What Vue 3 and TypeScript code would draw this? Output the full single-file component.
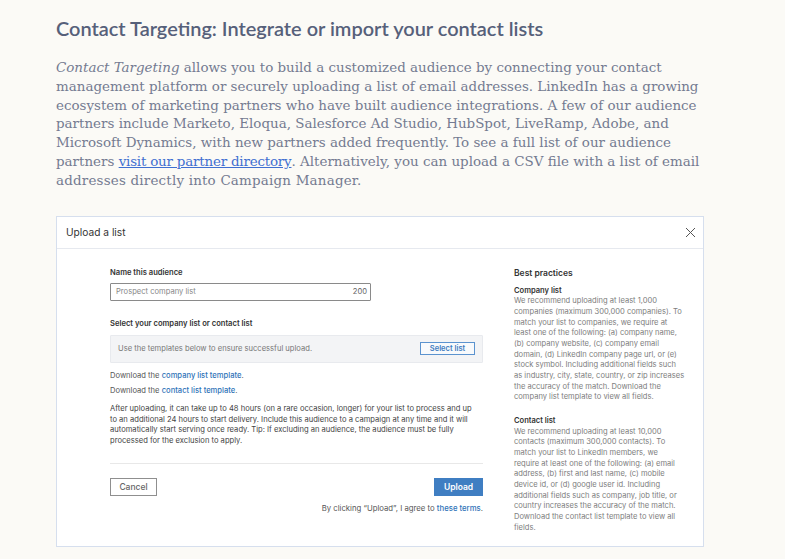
<script setup lang="ts">
const introLines: string[] = [
  'management platform or securely uploading a list of email addresses. LinkedIn has a growing',
  'ecosystem of marketing partners who have built audience integrations. A few of our audience',
  'partners include Marketo, Eloqua, Salesforce Ad Studio, HubSpot, LiveRamp, Adobe, and',
  'Microsoft Dynamics, with new partners added frequently. To see a full list of our audience',
]
const companyLines: string[] = [
  'We recommend uploading at least 1,000',
  'companies (maximum 300,000 companies). To',
  'match your list to companies, we require at',
  'least one of the following: (a) company name,',
  '(b) company website, (c) company email',
  'domain, (d) LinkedIn company page url, or (e)',
  'stock symbol. Including additional fields such',
  'as industry, city, state, country, or zip increases',
  'the accuracy of the match. Download the',
  'company list template to view all fields.',
]
const contactLines: string[] = [
  'We recommend uploading at least 10,000',
  'contacts (maximum 300,000 contacts). To',
  'match your list to LinkedIn members, we',
  'require at least one of the following: (a) email',
  'address, (b) first and last name, (c) mobile',
  'device id, or (d) google user id. Including',
  'additional fields such as company, job title, or',
  'country increases the accuracy of the match.',
  'Download the contact list template to view all',
  'fields.',
]
const noteLines: string[] = [
  'After uploading, it can take up to 48 hours (on a rare occasion, longer) for your list to process and up',
  'to an additional 24 hours to start delivery. Include this audience to a campaign at any time and it will',
  'automatically start serving once ready. Tip: If excluding an audience, the audience must be fully',
  'processed for the exclusion to apply.',
]
</script>

<template>
  <div class="page">
    <h1 class="title">Contact Targeting: Integrate or import your contact lists</h1>
    <div class="intro">
      <div><em>Contact Targeting</em> allows you to build a customized audience by connecting your contact</div>
      <div v-for="l in introLines" :key="l">{{ l }}</div>
      <div>partners <a class="intro-link">visit our partner directory</a>. Alternatively, you can upload a CSV file with a list of email</div>
      <div class="intro-last">addresses directly into Campaign Manager.</div>
    </div>
    <section class="modal">
      <header class="modal-head">
        <span class="modal-title">Upload a list</span>
        <svg class="close" width="11" height="11" viewBox="0 0 11 11" aria-label="Close">
          <path d="M1 1l9 9M10 1l-9 9" stroke="#555" stroke-width="1" fill="none" />
        </svg>
      </header>
      <div class="modal-body">
        <div class="form">
          <div class="label">Name this audience</div>
          <div class="input">
            <span>Prospect company list</span>
            <span class="count">200</span>
          </div>
          <div class="label second">Select your company list or contact list</div>
          <div class="drop">
            <span>Use the templates below to ensure successful upload.</span>
            <button class="select-btn">Select list</button>
          </div>
          <div class="dl">Download the <a class="link">company list template</a>.</div>
          <div class="dl dl2">Download the <a class="link">contact list template</a>.</div>
          <div class="note">
            <div v-for="l in noteLines" :key="l">{{ l }}</div>
          </div>
          <div class="rule"></div>
          <div class="actions">
            <button class="cancel">Cancel</button>
            <button class="upload">Upload</button>
          </div>
          <div class="terms">By clicking “Upload”, I agree to <a class="link">these terms</a>.</div>
        </div>
        <aside class="side">
          <div class="side-title">Best practices</div>
          <div class="side-sub">Company list</div>
          <div v-for="l in companyLines" :key="l">{{ l }}</div>
          <div class="side-sub gap">Contact list</div>
          <div v-for="l in contactLines" :key="l">{{ l }}</div>
        </aside>
      </div>
    </section>
  </div>
</template>

<style>
html, body { margin: 0; background: #fbfaf6; }
</style>

<style scoped>
.page {
  width: 785px;
  height: 559px;
  box-sizing: border-box;
  padding: 16px 0 0 56px;
  background: #fbfaf6;
  overflow: hidden;
}
.title {
  margin: 0;
  font: 600 19.95px/25px Lato, "Open Sans", sans-serif;
  color: #56607a;
  white-space: nowrap;
}
.intro {
  margin-top: 18px;
  font: 400 13.45px/18.8px "DejaVu Serif", serif;
  color: #747b91;
  white-space: nowrap;
}
.intro-link { color: #3f6fd1; text-decoration: underline; letter-spacing: -0.2px; }
.intro-last { letter-spacing: 0.2px; }
.modal {
  margin-top: 25px;
  width: 648px;
  height: 331px;
  box-sizing: border-box;
  background: #fff;
  border: 1px solid #d6dfee;
  font-family: Inter, "Liberation Sans", sans-serif;
}
.modal-head {
  height: 32px;
  box-sizing: border-box;
  padding: 0 7px 0 9px;
  display: flex;
  align-items: center;
  justify-content: space-between;
  border-bottom: 1px solid #e6e9ef;
}
.modal-title { font-size: 10.2px; color: #333; }
.modal-body {
  display: flex;
  padding: 18px 0 0 53px;
  white-space: nowrap;
}
.form {
  width: 373px;
  font-size: 7.6px;
  color: #555;
}
.label { font-weight: 600; color: #333; line-height: 11px; }
.second { margin-top: 17px; }
.input {
  margin-top: 5px;
  width: 261px;
  height: 18px;
  box-sizing: border-box;
  border: 1px solid #8a8a8a;
  border-radius: 1px;
  padding: 0 3px 0 5px;
  display: flex;
  align-items: center;
  justify-content: space-between;
  color: #888;
}
.count { color: #666; }
.drop {
  margin-top: 6px;
  height: 28px;
  box-sizing: border-box;
  background: #f3f4f6;
  border: 1px solid #e8eaee;
  border-radius: 1px;
  padding: 0 7px;
  display: flex;
  align-items: center;
  justify-content: space-between;
  color: #777;
}
.select-btn {
  width: 55px;
  height: 13px;
  padding: 0;
  border: 1px solid #5b93cf;
  background: #f8fafc;
  color: #3f7cc0;
  font: 600 7.5px Inter, sans-serif;
}
.dl { margin-top: 7px; line-height: 11px; }
.dl2 { margin-top: 4px; }
.link { color: #2f73b8; font-weight: 500; }
.note { margin-top: 8.5px; line-height: 10.67px; color: #444; }
.rule { margin-top: 16.5px; border-top: 1px solid #e8e8e8; }
.actions {
  margin-top: 14px;
  display: flex;
  justify-content: space-between;
}
.cancel {
  width: 47px;
  height: 18px;
  padding: 0;
  box-sizing: border-box;
  background: #fff;
  border: 1px solid #8f8f8f;
  color: #666;
  font: 500 8.5px Inter, sans-serif;
}
.upload {
  width: 49px;
  height: 18px;
  padding: 0;
  border: 0;
  background: #3f7ec2;
  color: #fff;
  font: 600 8.5px Inter, sans-serif;
}
.terms { margin-top: 7px; text-align: right; line-height: 11px; color: #555; font-size: 7.75px; }
.side {
  margin-left: 31px;
  padding-top: 1px;
  font-size: 7.55px;
  line-height: 10.67px;
  color: #7d7d7d;
}
.side-title { font-size: 8.5px; font-weight: 600; color: #333; margin-bottom: 7px; line-height: 11px; }
.side-sub { font-weight: 600; color: #333; }
.gap { margin-top: 13px; }
</style>
